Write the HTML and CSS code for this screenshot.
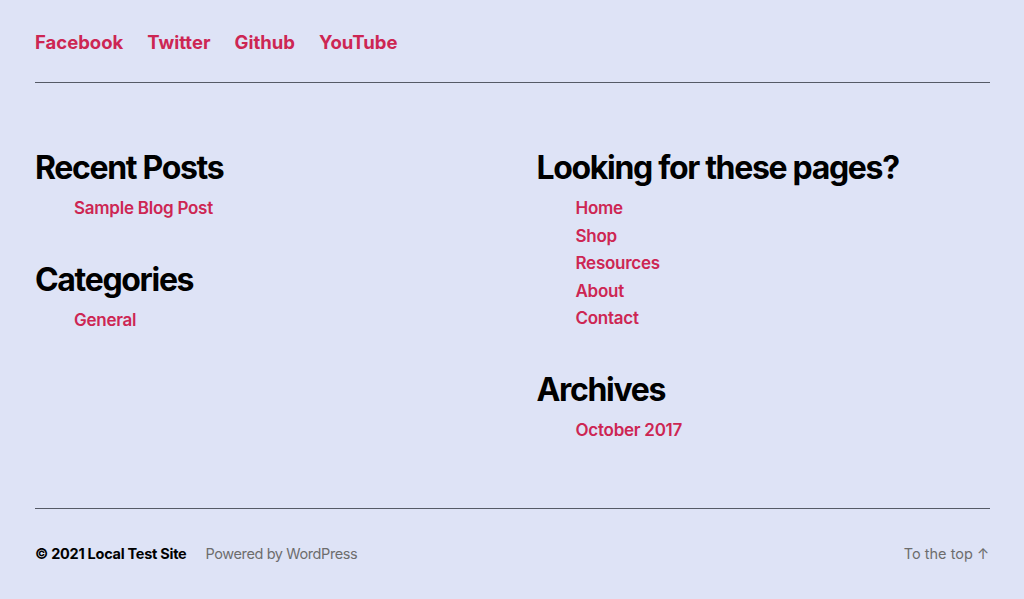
FILE: index.html
```html
<!DOCTYPE html>
<html lang="en">
<head>
<meta charset="utf-8">
<title>Footer</title>
<link rel="stylesheet" href="styles.css">
</head>
<body>
<div class="page">
  <nav class="social">
    <a href="#">Facebook</a>
    <a href="#">Twitter</a>
    <a href="#">Github</a>
    <a href="#">YouTube</a>
  </nav>
  <hr class="rule rule-top">
  <div class="widgets">
    <div class="col">
      <section class="widget">
        <h2>Recent Posts</h2>
        <ul><li><a href="#">Sample Blog Post</a></li></ul>
      </section>
      <section class="widget">
        <h2>Categories</h2>
        <ul><li><a href="#">General</a></li></ul>
      </section>
    </div>
    <div class="col">
      <section class="widget">
        <h2>Looking for these pages?</h2>
        <ul>
          <li><a href="#">Home</a></li>
          <li><a href="#">Shop</a></li>
          <li><a href="#">Resources</a></li>
          <li><a href="#">About</a></li>
          <li><a href="#">Contact</a></li>
        </ul>
      </section>
      <section class="widget">
        <h2>Archives</h2>
        <ul><li><a href="#">October 2017</a></li></ul>
      </section>
    </div>
  </div>
  <hr class="rule rule-bottom">
  <footer class="credits">
    <div class="left">
      <span class="copy">© 2021 Local Test Site</span>
      <span class="powered">Powered by WordPress</span>
    </div>
    <a class="top" href="#">To the top ↑</a>
  </footer>
</div>
</body>
</html>
```

FILE: styles.css
```css
html, body {
  margin: 0;
  padding: 0;
  background: #dee3f6;
}
body {
  font-family: Inter, "Liberation Sans", sans-serif;
  color: #000;
}
.page {
  padding: 0 34px 0 35px;
}
a {
  text-decoration: none;
  color: #cd2653;
}
.social {
  display: flex;
  gap: 24px;
  padding-top: 31px;
  height: 22px;
  font-size: 18.5px;
  font-weight: 650;
  letter-spacing: 0;
  line-height: 22px;
}
.rule {
  border: 0;
  margin: 0;
  height: 1px;
  background: #555a66;
}
.rule-top {
  margin-top: 29px;
}
.widgets {
  display: grid;
  grid-template-columns: 1fr 1fr;
  column-gap: 48px;
  padding-top: 67px;
  height: 425px;
  box-sizing: border-box;
}
.widget h2 {
  margin: 0;
  font-size: 32px;
  font-weight: 700;
  letter-spacing: -0.0415em;
  line-height: 36px;
}
.widget + .widget {
  margin-top: 39px;
}
.widget ul {
  margin: 9px 0 0;
  padding-left: 40px;
  list-style: none;
}
.widget li {
  font-size: 17px;
  font-weight: 600;
  line-height: 27.5px;
  letter-spacing: -0.015em;
}
.widget li a {
  margin-left: -1px;
}
.credits {
  display: flex;
  justify-content: space-between;
  align-items: center;
  padding-top: 35px;
  font-size: 14.5px;
  line-height: 20px;
}
.left {
  display: flex;
  gap: 19px;
}
.copy {
  font-weight: 650;
  color: #000;
  letter-spacing: -0.018em;
}
.powered {
  color: #6d6d6d;
  letter-spacing: -0.027em;
}
.top {
  color: #6d6d6d;
  margin-right: 1px;
}
```
